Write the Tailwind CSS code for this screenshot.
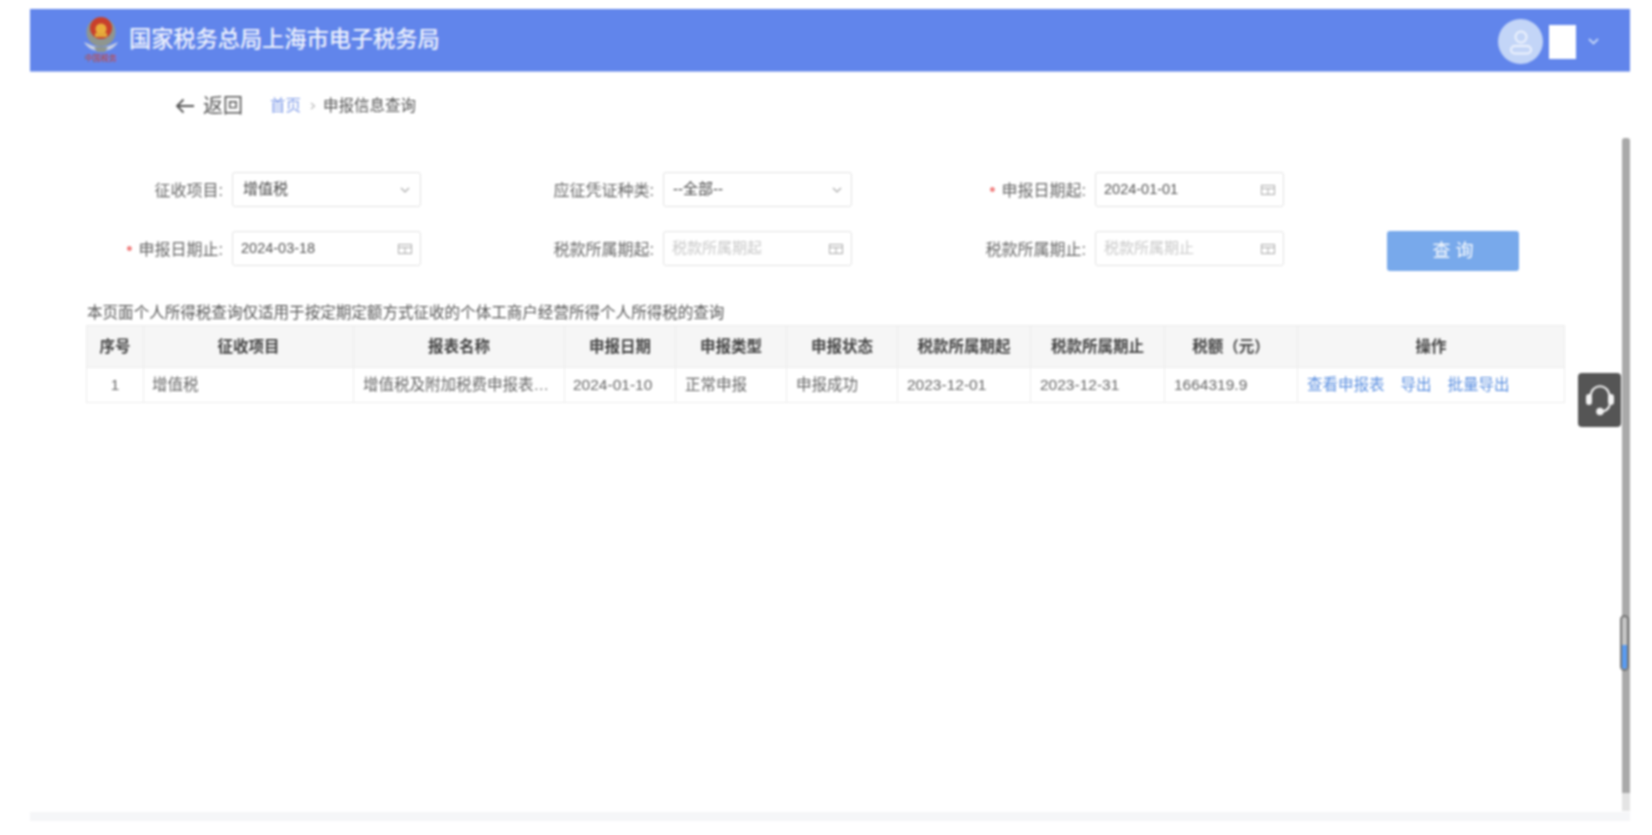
<!DOCTYPE html>
<html lang="zh-CN">
<head>
    <meta charset="UTF-8">
    <title>申报信息查询</title>
    <script src="https://cdn.jsdelivr.net/npm/@tailwindcss/browser@4"></script>
</head>
<body class="bg-white overflow-hidden font-['Liberation_Sans','Noto_Sans_CJK_SC',sans-serif]">
<div class="relative w-[1652px] h-[835px] overflow-hidden blur-[1px]">
    <div class="mx-[30px] w-[1600px] h-[803px] pt-[9px]">

        <!-- Header -->
        <header class="flex items-center h-[63px] bg-[#6185eb] border-b border-[#a9bdf3]">
            <svg class="ml-[53px] mb-[4px] w-[37px] h-[48px]" viewBox="0 0 37 48">
                <circle cx="18" cy="18" r="14.500" fill="#8f968f"/>
                <path d="M1 28 C7 31 12 33 18 33 C24 33 29 31 35 28 C31 35 25 37 18 37 C11 37 5 35 1 28Z" fill="#ccd3e2"/>
                <path d="M11 33 H25 L22 38 H14 Z" fill="#8f968f"/>
                <circle cx="18" cy="14" r="11" fill="#c8402c"/>
                <circle cx="18" cy="15" r="5.500" fill="#e9ad3c"/>
                <rect x="12" y="19" width="12" height="4" fill="#e2a63a"/>
                <text x="18" y="47" text-anchor="middle" font-size="8" fill="#c8402c" font-family="'Noto Sans CJK SC'">中国税务</text>
            </svg>
            <span class="ml-[9px] text-[22.200px] leading-none text-white/90 font-medium">国家税务总局上海市电子税务局</span>
            <div class="ml-auto mt-[3px] flex items-center">
                <div class="w-[45px] h-[45px] rounded-full bg-[#c3d5f7] flex items-center justify-center">
                    <svg class="w-[30px] h-[30px]" viewBox="0 0 30 30" fill="none" stroke="#eef3fd" stroke-width="2">
                        <circle cx="15" cy="10" r="5.500"/>
                        <rect x="5" y="19" width="20" height="7.500" rx="3.700"/>
                    </svg>
                </div>
                <div class="ml-[6px] w-[27px] h-[34px] bg-white"></div>
                <svg class="ml-[12px] mr-[31px] w-[11px] h-[7px]" viewBox="0 0 11 7" fill="none" stroke="#c3d5f7" stroke-width="1.800">
                    <path d="M1 1 L5.500 5.500 L10 1"/>
                </svg>
            </div>
        </header>

        <!-- Back and breadcrumb -->
        <div class="mt-[20px] h-[28px] flex items-center pl-[145px]">
            <svg class="w-[20px] h-[16px]" viewBox="0 0 20 16" fill="none" stroke="#555" stroke-width="1.800">
                <path d="M19 8 H2 M8.500 1.500 L2 8 L8.500 14.500"/>
            </svg>
            <span class="ml-[8px] text-[20px] text-[#555]">返回</span>
            <span class="ml-[27px] text-[15.500px] text-[#7f9be8]">首页</span>
            <svg class="ml-[9px] w-[6px] h-[8px]" viewBox="0 0 6 8" fill="none" stroke="#bbb" stroke-width="1.200">
                <path d="M1 1 L4.500 4 L1 7"/>
            </svg>
            <span class="ml-[7px] text-[15.500px] text-[#555]">申报信息查询</span>
        </div>

        <!-- Search form -->
        <div class="mt-[52px] ml-[56px] grid grid-cols-[335px_335px_336px_auto] gap-x-[96px] gap-y-[24px] items-start text-[16px] text-[#666]">
            <div class="flex items-center">
                <label class="w-[137px] pt-[2px] text-right">征收项目:</label>
                <div class="ml-[9px] w-[189px] h-[35px] flex items-center justify-between px-[10px] bg-white border border-[#e2e2e2] rounded-[3px] text-[#444] text-[15px]">
                    <span>增值税</span>
                    <svg class="w-[10px] h-[6px]" viewBox="0 0 10 6" fill="none" stroke="#aaa" stroke-width="1.200"><path d="M1 1 L5 5 L9 1"/></svg>
                </div>
            </div>
            <div class="flex items-center">
                <label class="w-[137px] pt-[2px] text-right">应征凭证种类:</label>
                <div class="ml-[9px] w-[189px] h-[35px] flex items-center justify-between px-[9px] bg-white border border-[#e2e2e2] rounded-[3px] text-[#444] text-[15px]">
                    <span>--全部--</span>
                    <svg class="w-[10px] h-[6px]" viewBox="0 0 10 6" fill="none" stroke="#aaa" stroke-width="1.200"><path d="M1 1 L5 5 L9 1"/></svg>
                </div>
            </div>
            <div class="flex items-center">
                <label class="w-[138px] pt-[2px] text-right whitespace-nowrap"><span class="text-[#f08080] text-[18px] mr-[6px]">•</span>申报日期起:</label>
                <div class="ml-[9px] w-[189px] h-[35px] flex items-center justify-between px-[8px] bg-white border border-[#e2e2e2] rounded-[3px] text-[#555] text-[14.500px]">
                    <span>2024-01-01</span>
                    <svg class="w-[14px] h-[12px]" viewBox="0 0 14 12" fill="none" stroke="#aaa"><rect x="0.500" y="1.500" width="13" height="9"/><path d="M0.500 4.500 H13.500 M7 4.500 V10.500"/></svg>
                </div>
            </div>
            <div></div>
            <div class="flex items-center">
                <label class="w-[137px] pt-[2px] text-right whitespace-nowrap"><span class="text-[#f08080] text-[18px] mr-[6px]">•</span>申报日期止:</label>
                <div class="ml-[9px] w-[189px] h-[35px] flex items-center justify-between px-[8px] bg-white border border-[#e2e2e2] rounded-[3px] text-[#555] text-[14.500px]">
                    <span>2024-03-18</span>
                    <svg class="w-[14px] h-[12px]" viewBox="0 0 14 12" fill="none" stroke="#aaa"><rect x="0.500" y="1.500" width="13" height="9"/><path d="M0.500 4.500 H13.500 M7 4.500 V10.500"/></svg>
                </div>
            </div>
            <div class="flex items-center">
                <label class="w-[137px] pt-[2px] text-right">税款所属期起:</label>
                <div class="ml-[9px] w-[189px] h-[35px] flex items-center justify-between px-[8px] bg-white border border-[#e2e2e2] rounded-[3px] text-[#c8c8c8] text-[15px]">
                    <span>税款所属期起</span>
                    <svg class="w-[14px] h-[12px]" viewBox="0 0 14 12" fill="none" stroke="#aaa"><rect x="0.500" y="1.500" width="13" height="9"/><path d="M0.500 4.500 H13.500 M7 4.500 V10.500"/></svg>
                </div>
            </div>
            <div class="flex items-center">
                <label class="w-[138px] pt-[2px] text-right">税款所属期止:</label>
                <div class="ml-[9px] w-[189px] h-[35px] flex items-center justify-between px-[8px] bg-white border border-[#e2e2e2] rounded-[3px] text-[#c8c8c8] text-[15px]">
                    <span>税款所属期止</span>
                    <svg class="w-[14px] h-[12px]" viewBox="0 0 14 12" fill="none" stroke="#aaa"><rect x="0.500" y="1.500" width="13" height="9"/><path d="M0.500 4.500 H13.500 M7 4.500 V10.500"/></svg>
                </div>
            </div>
            <button class="ml-[7px] w-[132px] h-[40px] bg-[#78a9eb] rounded-[3px] text-white text-[18px]">查 询</button>
        </div>

        <!-- Note -->
        <p class="mt-[31px] ml-[57px] h-[22px] leading-[22px] text-[15.550px] text-[#555] whitespace-nowrap">本页面个人所得税查询仅适用于按定期定额方式征收的个体工商户经营所得个人所得税的查询</p>

        <!-- Results table -->
        <table class="ml-[56px] mt-px w-[1479px] table-fixed border-collapse text-[15.500px] text-[#666]">
            <colgroup>
                <col class="w-[57px]"><col class="w-[210px]"><col class="w-[211px]"><col class="w-[111px]"><col class="w-[111px]"><col class="w-[111px]"><col class="w-[133px]"><col class="w-[134px]"><col class="w-[133px]"><col>
            </colgroup>
            <thead>
                <tr class="h-[42px] bg-[#f6f6f6] text-[#444]">
                    <th class="border border-[#ececec] font-bold">序号</th>
                    <th class="border border-[#ececec] font-bold">征收项目</th>
                    <th class="border border-[#ececec] font-bold">报表名称</th>
                    <th class="border border-[#ececec] font-bold">申报日期</th>
                    <th class="border border-[#ececec] font-bold">申报类型</th>
                    <th class="border border-[#ececec] font-bold">申报状态</th>
                    <th class="border border-[#ececec] font-bold">税款所属期起</th>
                    <th class="border border-[#ececec] font-bold">税款所属期止</th>
                    <th class="border border-[#ececec] font-bold">税额（元）</th>
                    <th class="border border-[#ececec] font-bold">操作</th>
                </tr>
            </thead>
            <tbody>
                <tr class="h-[35px]">
                    <td class="border border-[#ececec] text-center">1</td>
                    <td class="border border-[#ececec] px-[8px]">增值税</td>
                    <td class="border border-[#ececec] px-[9px] whitespace-nowrap">增值税及附加税费申报表…</td>
                    <td class="border border-[#ececec] px-[8px]">2024-01-10</td>
                    <td class="border border-[#ececec] px-[9px]">正常申报</td>
                    <td class="border border-[#ececec] px-[9px]">申报成功</td>
                    <td class="border border-[#ececec] px-[9px]">2023-12-01</td>
                    <td class="border border-[#ececec] px-[9px]">2023-12-31</td>
                    <td class="border border-[#ececec] px-[9px]">1664319.9</td>
                    <td class="border border-[#ececec] px-[9px] text-[#5b8fe0]">
                        <a class="mr-[16px]">查看申报表</a><a class="mr-[16px]">导出</a><a>批量导出</a>
                    </td>
                </tr>
            </tbody>
        </table>
    </div>

    <!-- Footer strip -->
    <div class="mt-[9px] mx-[30px] w-[1600px] h-[9px] bg-[#f5f6f8]"></div>

    <!-- Floating support button -->
    <div class="absolute left-[1578px] top-[373px] w-[43px] h-[54px] rounded-[4px] bg-[#555] flex items-center justify-center">
        <svg class="w-[30px] h-[32px]" viewBox="0 0 30 32" fill="none" stroke="#f2f2f2" stroke-width="2">
            <path d="M5.500 12 C6.500 -1 23.500 -1 24.500 12"/>
            <rect x="2" y="11" width="4" height="9" rx="2" fill="#f2f2f2"/>
            <rect x="24" y="11" width="4" height="9" rx="2" fill="#f2f2f2"/>
            <path d="M25 20 C24 25 21 27 17 27.500"/>
            <circle cx="15" cy="27.500" r="2.800" fill="#f2f2f2"/>
        </svg>
    </div>

    <!-- Scrollbar overlay -->
    <div class="absolute left-[1622px] top-[138px] w-[8px] h-[673px] bg-[#e4e4e4] rounded-t-[3px]">
        <div class="h-[655px] bg-[#a9a9a9] rounded-t-[3px]"></div>
    </div>
    <div class="absolute left-[1620px] top-[615px] w-[9px] h-[56px] rounded-full border-2 border-[#777] bg-[#c4c4c4] overflow-hidden">
        <div class="mt-[28px] h-[24px] bg-[#5a9bf0]"></div>
    </div>
</div>
</body>
</html>
